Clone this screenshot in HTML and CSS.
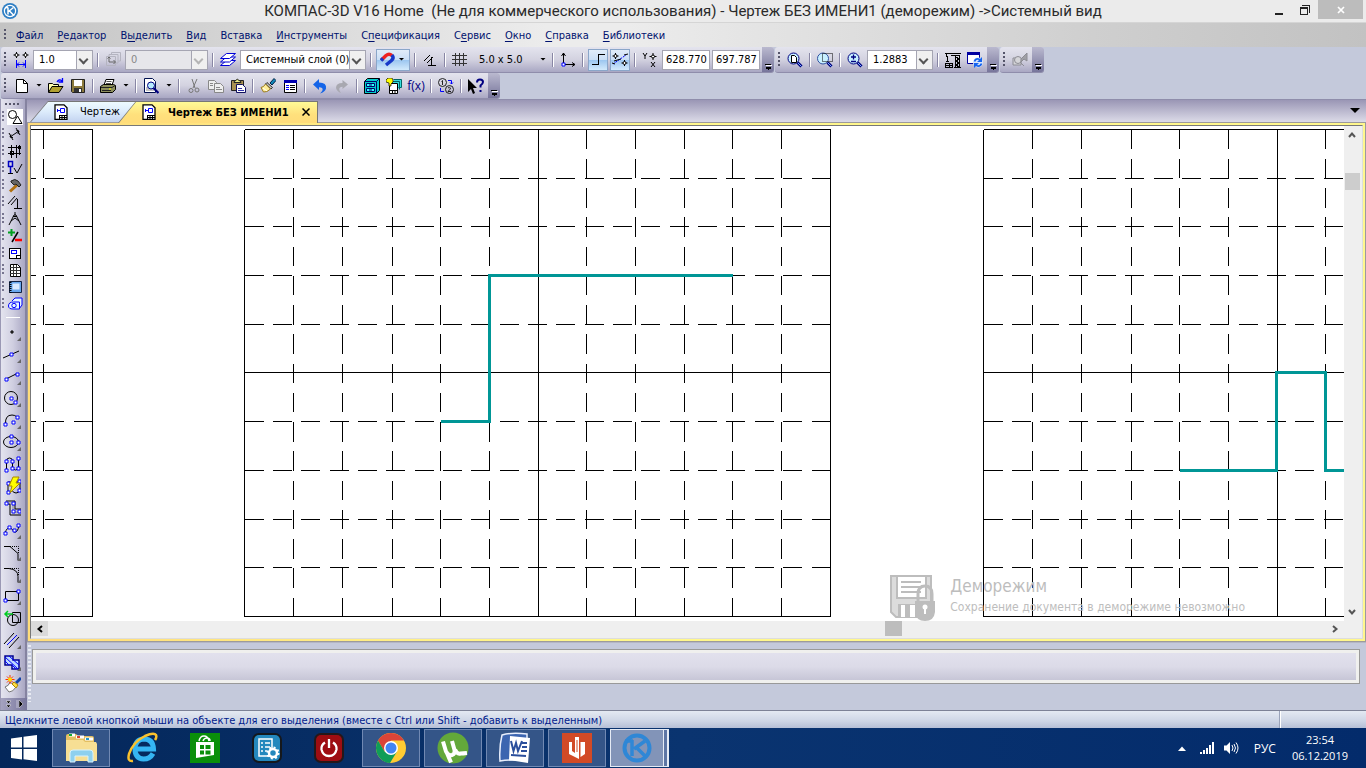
FILE: index.html
```html
<!DOCTYPE html>
<html lang="ru">
<head>
  <meta charset="UTF-8">
  <meta name="viewport" content="width=device-width, initial-scale=1.0">
  <title>КОМПАС-3D V16 Home</title>
  <link rel="stylesheet" href="styles.css">
</head>
<body>
  <!-- Title bar -->
  <header class="titlebar">
    <svg class="app-logo" viewBox="0 0 16 16"><circle cx="8" cy="8" r="8" fill="#2f7fc4"/><circle cx="8" cy="8" r="5.6" fill="none" stroke="#fff" stroke-width="1.2"/><path d="M6 4.500v7M6.500 8.500l5-4M7.500 8l4.500 4.500M3 5l3-1" fill="none" stroke="#fff" stroke-width="1.500"/></svg>
    <h1>КОМПАС-3D V16 Home&nbsp; (Не для коммерческого использования) - Чертеж БЕЗ ИМЕНИ1 (деморежим) -&gt;Системный вид</h1>
    <div class="window-buttons">
      <button aria-label="Свернуть"><svg viewBox="0 0 12 12"><path d="M2 9h8v2H2z" fill="#222"/></svg></button>
      <button aria-label="Восстановить"><svg viewBox="0 0 12 12" class="crisp"><path d="M1.500 3.500h7v7h-7zM1 4.500h8M3 1.500h7.500V9" fill="none" stroke="#222"/></svg></button>
      <button class="close" aria-label="Закрыть"><svg viewBox="0 0 12 12"><path d="M3 3l6 6M9 3L3 9" stroke="#fff" stroke-width="1.700"/></svg></button>
    </div>
  </header>

  <!-- Menu -->
  <nav class="menu">
    <span class="grip"></span>
    <a href="#"><u>Ф</u>айл</a>
    <a href="#"><u>Р</u>едактор</a>
    <a href="#">В<u>ы</u>делить</a>
    <a href="#"><u>В</u>ид</a>
    <a href="#">Вст<u>а</u>вка</a>
    <a href="#"><u>И</u>нструменты</a>
    <a href="#">С<u>п</u>ецификация</a>
    <a href="#">С<u>е</u>рвис</a>
    <a href="#"><u>О</u>кно</a>
    <a href="#"><u>С</u>правка</a>
    <a href="#"><u>Б</u>иблиотеки</a>
  </nav>

  <!-- Current state toolbar -->
  <div class="toolbar-row">
    <div class="toolbar">
      <span class="grip"></span>
      <button class="tool" aria-label="Шаг курсора"><svg viewBox="0 0 16 16"><path d="M3.500 0v6M.5 3h6M12.500 0v6M9.500 3h6" stroke="#000"/><circle cx="3.500" cy="3" r="1.500" fill="#fff" stroke="#000"/><circle cx="12.500" cy="3" r="1.500" fill="#fff" stroke="#000"/><path d="M3.500 8v8M12.500 8v8M4 12.500h8M6 10.500l-2 2 2 2M10 10.500l2 2-2 2" fill="none" stroke="#00f"/></svg></button>
      <span class="combo w-60"><select aria-label="Шаг"><option>1.0</option></select></span>
      <span class="sep"></span>
      <button class="tool" aria-label="Состояния видов"><svg viewBox="0 0 16 16" fill="none" stroke="#b4b4c0"><path d="M6.500 3V.5h9V9h-2M4 5V2.500h9V11h-2M1.500 4.500h9v9h-9z"/><path d="M4 5v5h6M2.500 6.500L4 5l1.500 1.500M8.500 8l2 2-2 2" stroke="#666"/></svg></button>
      <span class="combo w-83 off"><select aria-label="Вид" disabled><option>0</option></select></span>
      <span class="sep"></span>
      <button class="tool" aria-label="Слои"><svg viewBox="0 0 16 16" fill="#fff" stroke="#0000d8"><path d="M.5 13.500h9l6-5h-9z"/><path d="M.5 10h9l6-5h-9z"/><path d="M.5 6.500h9l6-5h-9z"/></svg></button>
      <span class="combo w-126"><select aria-label="Слой"><option>Системный слой (0)</option></select></span>
      <span class="sep"></span>
      <button class="tool on wide" aria-label="Привязки"><svg viewBox="0 0 16 16" fill="none" stroke-width="3.500"><path d="M1.500 8L6 3.500Q9 1 12 3.500" stroke="#e22"/><path d="M12 3q2.500 3-.5 5.500L6 13" stroke="#1738c8"/><path d="M1 8.500l2-2" stroke="#1738c8"/></svg><i class="arrow"></i></button>
      <span class="sep"></span>
      <button class="tool" aria-label="Ограничения"><svg viewBox="0 0 16 16" fill="none" stroke="#000"><path d="M2 9l6-6M5 11l6-6M9.500 5v8M6 13.500h8"/></svg></button>
      <span class="sep"></span>
      <button class="tool" aria-label="Сетка"><svg viewBox="0 0 16 16" class="crisp" stroke="#333"><path d="M0 3.500h15M0 7.500h15M0 11.500h15M3.500 1v13M7.500 1v13M11.500 1v13"/></svg></button>
      <button class="grid-step">5.0 x 5.0<i class="arrow"></i></button>
      <span class="sep"></span>
      <button class="tool" aria-label="Локальная СК"><svg viewBox="0 0 16 16" fill="none" stroke="#000"><path d="M3.500 12V1M1.500 4l2-3 2 3M5 12.500h10M12 10.500l3 2-3 2"/><path d="M2 11h3v3H2z" fill="#fff" stroke="#00f"/></svg></button>
      <span class="sep"></span>
      <button class="tool on" aria-label="Ортогональное черчение"><svg viewBox="0 0 16 16" class="crisp"><path d="M2 12.500h6.500v-10H15" fill="none" stroke="#000"/></svg></button>
      <button class="tool on" aria-label="Округление"><svg viewBox="0 0 16 16" fill="none" stroke="#000"><path d="M3.500 1v6M.5 4h6M12.500 8v6M9.500 11h6"/><path d="M1 12L14 3" stroke="#00f" stroke-dasharray="2 1"/><path d="M0 11l3 1M12 3l4-1M2 9l7-2"/><circle cx="3.500" cy="4" r="1.500" fill="#fff"/><circle cx="12.500" cy="11" r="1.500" fill="#fff"/></svg></button>
      <span class="sep"></span>
      <button class="tool" aria-label="Координаты"><svg viewBox="0 0 16 16" fill="none" stroke="#000"><path d="M1 1l2 3 2-3M3 4v3M9 10l4 5M13 10l-4 5M11 1v7M7.500 4.500h7"/><circle cx="11" cy="4.500" r="1.500" fill="#fff"/></svg></button>
      <input class="coord" type="text" value="628.770" aria-label="X">
      <input class="coord" type="text" value="697.787" aria-label="Y">
      <span class="cap"></span>
    </div>
    <div class="toolbar">
      <span class="grip"></span>
      <button class="tool" aria-label="Показать все"><svg viewBox="0 0 16 16"><circle cx="6.500" cy="6.500" r="5.500" fill="#c8f0ff" stroke="#000080"/><path d="M4.500 3.500h3l2 2v5h-5z" fill="#fff" stroke="#000"/><path d="M10.500 10.500l4 4" stroke="#000080" stroke-width="3"/><path d="M11 11l3.500 3.500" stroke="#7ab0ff"/></svg></button>
      <span class="sep"></span>
      <button class="tool" aria-label="Увеличить рамкой"><svg viewBox="0 0 16 16"><circle cx="6" cy="6.500" r="5.500" fill="#c8f0ff" stroke="#3050a0"/><path d="M5.500 1.500h10v8h-10z" fill="none" stroke="#000" stroke-dasharray="1 1"/><path d="M10.500 10.500l4 4" stroke="#000080" stroke-width="3"/><path d="M11 11l3.500 3.500" stroke="#7ab0ff"/></svg></button>
      <span class="sep"></span>
      <button class="tool" aria-label="Масштаб"><svg viewBox="0 0 16 16"><circle cx="6.500" cy="6.500" r="5.500" fill="#c8f0ff" stroke="#000080"/><path d="M6.500 2.500v5M4 5h5M4 9.500h5" stroke="#000080" stroke-width="1.300"/><path d="M10.500 10.500l4 4" stroke="#000080" stroke-width="3"/><path d="M11 11l3.500 3.500" stroke="#7ab0ff"/></svg></button>
      <span class="combo w-66"><select aria-label="Текущий масштаб"><option>1.2883</option></select></span>
      <span class="sep"></span>
      <button class="tool" aria-label="Перестроить"><svg viewBox="0 0 16 16" class="crisp" fill="none" stroke="#000"><path d="M0 1.500h16M1.500 2v3M2.500 4v5M1 9.500h3M.5 11.500h7v4h-7zM4 11v5M0 13.500h8M6 3.500h9"/><path d="M10.500 4v11M14.500 4v11M9 15.500h7"/><path d="M11 5l3 2-3 2 3 2-3 2 3 2"/></svg></button>
      <button class="tool" aria-label="Обновить"><svg viewBox="0 0 16 16"><path d="M.5.500h12v11H.5z" fill="#fff" stroke="#0000a0"/><path d="M0 0h13v3H0z" fill="#0000a0"/><circle cx="11" cy="10.500" r="5" fill="#d9e6fb"/><path d="M7.500 9.500q1-3 4-2.500l2 1M14.500 11.500q-1 3-4 2.500l-2-1" fill="none" stroke="#1464f0" stroke-width="1.700"/><path d="M15 5v5h-5zM7 16v-5h5z" fill="#1464f0"/></svg></button>
      <span class="cap"></span>
    </div>
    <div class="toolbar">
      <span class="grip"></span>
      <button class="tool" aria-label="Вид" disabled><svg viewBox="0 0 16 16" fill="#d5d5d9" stroke="#8c8c94"><path d="M1 6h8v7H1z"/><circle cx="6" cy="8" r="3.500"/><path d="M9 7l6-6v8l-3-2-3 3z" fill="#a0a0a6"/><path d="M8 10l4 4"/></svg></button>
      <span class="cap"></span>
    </div>
  </div>

  <!-- Standard toolbar -->
  <div class="toolbar-row">
    <div class="toolbar">
      <span class="grip"></span>
      <button class="tool" aria-label="Создать"><svg viewBox="0 0 16 16"><path d="M3.500 1.500h7l4 4v9h-11z" fill="#fff" stroke="#000"/><path d="M10.500 1.500v4h4" fill="none" stroke="#000"/></svg></button>
      <i class="arrow"></i>
      <button class="tool" aria-label="Открыть"><svg viewBox="0 0 16 16"><path d="M.5 14V5.500h4l1 1h5V9" fill="#ffffb0" stroke="#000"/><path d="M.5 14.500l3.500-6h11l-4 6z" fill="#b0a030" stroke="#000"/><path d="M9 4q2-3.500 5-1M14.500 0v4h-4" fill="none" stroke="#00f" stroke-width="1.300"/></svg></button>
      <button class="tool" aria-label="Сохранить"><svg viewBox="0 0 16 16"><path d="M1.500 1.500h13v13h-12l-1-1z" fill="#8c7a3c" stroke="#222"/><path d="M4 2h8v6H4z" fill="#fff"/><path d="M4 10h8v4H4z" fill="#333"/><path d="M9 11h2v3H9z" fill="#fff"/></svg></button>
      <span class="sep"></span>
      <button class="tool" aria-label="Печать"><svg viewBox="0 0 16 16"><path d="M4 7l2-5.500h8L12 7z" fill="#fff" stroke="#000"/><path d="M6.500 3.500h5M6 5.500h5" stroke="#555"/><path d="M.5 8.500l3-2h10l2 1v4l-3 3H.5z" fill="#8d8f5d" stroke="#000"/><path d="M1 9.500h11l3-2M2 12.500h9" fill="none" stroke="#222"/><path d="M9 11h2" stroke="#ff0"/></svg></button>
      <i class="arrow"></i>
      <span class="sep"></span>
      <button class="tool" aria-label="Просмотр"><svg viewBox="0 0 16 16"><path d="M1.500.5h8l3 3v11h-11z" fill="#fff" stroke="#001050"/><path d="M3 12h8M3 10h2" stroke="#888"/><circle cx="8" cy="7.500" r="3.500" fill="#b8ecff" stroke="#000080"/><path d="M10.500 10l5 5" stroke="#000080" stroke-width="2.200"/></svg></button>
      <i class="arrow"></i>
      <span class="sep"></span>
      <button class="tool" aria-label="Вырезать"><svg viewBox="0 0 16 16" fill="none" stroke="#777"><path d="M6 1l3 9M11 1L7 10"/><circle cx="5" cy="12.500" r="2"/><circle cx="11" cy="12" r="2"/></svg></button>
      <button class="tool" aria-label="Копировать"><svg viewBox="0 0 16 16" fill="#eee" stroke="#888"><path d="M.5 2.500h6l2 2v7h-8z"/><path d="M6.500 5.500h6l3 3v6h-9z"/><path d="M2 5.500h3M2 7.500h3M8 9.500h4M8 11.500h6"/></svg></button>
      <button class="tool" aria-label="Вставить"><svg viewBox="0 0 16 16"><path d="M1.500 2.500h12v10h-12z" fill="#a89050" stroke="#222"/><path d="M4 4.500q0-2 2-2 1-3 3 0 2 0 2 2z" fill="#ee8" stroke="#222"/><path d="M6.500 6.500h6l3 3v5h-9z" fill="#fff" stroke="#101060"/><path d="M8 10.500h4M8 12.500h6" stroke="#33a"/></svg></button>
      <span class="sep"></span>
      <button class="tool" aria-label="Копировать свойства"><svg viewBox="0 0 16 16"><path d="M10 5l4-4.500 2 2L12 7z" fill="#18b" stroke="#024"/><path d="M7 4.500l5.500 5L11 11 5.500 6z" fill="#bbb" stroke="#333"/><path d="M5.500 6l5 5Q7 14.500 3.500 14L1 9.500Q4 9 5.500 6z" fill="#fe9" stroke="#997a20"/><path d="M3 10l4 3" stroke="#fff"/></svg></button>
      <button class="tool" aria-label="Свойства"><svg viewBox="0 0 16 16"><path d="M2.500 2.500h12v12h-12z" fill="#fff" stroke="#000"/><path d="M2 2h13v3H2z" fill="#0000b0"/><path d="M4 7.500h3M4 9.500h3M4 11.500h3" stroke="#00f"/><path d="M8 7.500h5M8 9.500h5M8 11.500h5" stroke="#000"/></svg></button>
      <span class="sep"></span>
      <button class="tool" aria-label="Отменить"><svg viewBox="0 0 16 16"><path d="M1 6.500L7 1v3.500q8 0 7 6Q13 14 8 15.500q4-4 2-5.500-1-.8-3-.8V12z" fill="#1565e8"/></svg></button>
      <button class="tool" aria-label="Повторить"><svg viewBox="0 0 16 16"><path d="M14 6.500L8.500 2v3Q2 5 2 10q1 3.500 5 5-3-4-1-5.500 1-.7 2.500-.7V11z" fill="#a8a8b0"/></svg></button>
      <span class="sep"></span>
      <button class="tool" aria-label="Менеджер библиотек"><svg viewBox="0 0 16 16"><path d="M.5 3.500l3-3h12v12l-3 3H.5z" fill="#0cc" stroke="#000"/><path d="M.5 3.500h12v12M12.500 3.500l3-3" fill="none" stroke="#006"/><path d="M2.500 5.500h8v3h-8zM2.500 10.500h8v3h-8z" fill="#3ff" stroke="#006"/><path d="M5 7h3M5 12h3" stroke="#006"/></svg></button>
      <button class="tool" aria-label="Дерево"><svg viewBox="0 0 16 16"><path d="M7.500 1.500h8v8h-3M5.500 3.500h8v8" fill="#3dd" stroke="#066"/><path d="M3.500 5.500h8v10h-8z" fill="#fff" stroke="#000"/><path d="M3 12.500h9M6.500 12v4M9 12v4" stroke="#000"/><path d="M0 2l2-2h4l1 2v2L5 6v2H3V5L0 4z" fill="#ff0" stroke="#000" stroke-width=".7"/></svg></button>
      <button class="tool fx">f(x)</button>
      <span class="sep"></span>
      <button class="tool" aria-label="Перенумеровать"><svg viewBox="0 0 16 16" fill="none" stroke="#222"><circle cx="4.500" cy="4.500" r="4"/><circle cx="11.500" cy="11.500" r="4"/><path d="M3.500 3.500l1-1V7M10 10q1.500-1.500 2.500 0 0 1-2.500 3.500h3"/><path d="M10 2.500h3.500V6M12 4.500l1.500 1.500L15 4.500M6 13.500H2.500V10" stroke="#00f"/></svg></button>
      <span class="sep"></span>
      <button class="tool" aria-label="Справка"><svg viewBox="0 0 16 16"><path d="M0 1v13l3-3 2 5 2-1-2-5h4z" fill="#000"/><path d="M9 4.500Q9 1.500 12 1.500t3 2.500q0 1.500-2.500 3.500v2M12.500 12v2" fill="none" stroke="#000080" stroke-width="2"/></svg></button>
      <span class="cap"></span>
    </div>
  </div>

  <main class="work">
    <!-- Compact panel -->
    <aside class="side">
      <span class="side-handle"></span>
      <div class="groups">
        <button class="on" aria-label="Геометрия"><svg viewBox="0 0 16 16" fill="#fff" stroke="#000"><circle cx="5.500" cy="5.500" r="4"/><path d="M10.500 7l4.500 7.500H6z"/></svg></button>
        <button aria-label="Размеры"><svg viewBox="0 0 16 16" fill="none" stroke="#000"><path d="M3 11l9-6M2 7l4 7M9 2l4 7M4 8.500L3 11l3 .5M9.500 4.500L12 5l-1 3"/></svg></button>
        <button aria-label="Обозначения"><svg viewBox="0 0 16 16" class="crisp" fill="none" stroke="#000"><path d="M1 4.500h13M1 10.500h13M4.500 2v13M9.500 2v13M12.500 2v10"/><path d="M3.500 8.500h3v3h-3zM11.500 3.500h2v2h-2z"/></svg></button>
        <button aria-label="Построение"><svg viewBox="0 0 16 16" fill="none"><path d="M1.500 1.500h4v5h-4zM3.500 7v6" stroke="#0000c0" stroke-width="1.500"/><path d="M1 13.500h5M7 8l3 5 5-9" stroke="#000"/></svg></button>
        <button aria-label="Редактирование"><svg viewBox="0 0 16 16"><path d="M10 8L3 14.500" stroke="#b07010" stroke-width="3"/><path d="M4 4q4-3 7 0l3 4-2 2-3-3-2 1-3-3z" fill="#666" stroke="#222"/></svg></button>
        <button aria-label="Параметризация"><svg viewBox="0 0 16 16" fill="none" stroke="#000"><path d="M1 10l7-8M4 11l6-7M10.500 5v9M7 14.500h8"/></svg></button>
        <button aria-label="Измерения"><svg viewBox="0 0 16 16" fill="none" stroke="#000"><path d="M2 14L7 4h2l5 10M8 1v3M4 10l4-3 4 3M6 5.500h4"/></svg></button>
        <button aria-label="Выделение"><svg viewBox="0 0 16 16"><path d="M4.500 1v7M1 4.500h7" stroke="#00a020" stroke-width="2"/><path d="M5 14l6-10" stroke="#000" stroke-width="1.500"/><path d="M8 12h7" stroke="#f00" stroke-width="2.500"/></svg></button>
        <button aria-label="Ассоциативные виды"><svg viewBox="0 0 16 16" class="crisp"><path d="M2.500 3.500h11v10h-11z" fill="#fff" stroke="#000"/><path d="M4.500 5.500h5v3h-5z" fill="none" stroke="#00f"/><path d="M9.500 10.500h4v3h-4z" fill="none" stroke="#000"/></svg></button>
        <button aria-label="Спецификация"><svg viewBox="0 0 16 16"><path d="M3.500 2.500h7l3 3v9h-10z" fill="#fff" stroke="#000"/><path d="M3 5.500h10M3 8.500h10M3 11.500h10M6.500 3v11M9.500 3v11" stroke="#333"/></svg></button>
        <button aria-label="Отчеты"><svg viewBox="0 0 16 16"><path d="M2.500 2.500h12v11h-12z" fill="#69a8ef" stroke="#124"/><path d="M5.500 4.500h7v6h-7z" fill="#d9eaff"/><path d="M3.500 3v11" stroke="#000" stroke-width="2" stroke-dasharray="1 1"/></svg></button>
        <button aria-label="Вставки"><svg viewBox="0 0 16 16" fill="#e6f4ff" stroke="#00f"><path d="M5 5l3-3h7v7l-3 4"/><path d="M1.500 10q0-4 5-4h6v7H6q-4.500 0-4.500-3z"/><circle cx="7" cy="9.500" r="2.200"/></svg></button>
      </div>
      <div class="tools">
        <button class="more" aria-label="Точка"><svg viewBox="0 0 20 20"><circle cx="11" cy="10" r="1.200" fill="#555" stroke="#000"/></svg></button>
        <button class="more" aria-label="Вспомогательная прямая"><svg viewBox="0 0 20 20"><path d="M2 14L18 7" stroke="#000"/><path class="node" d="M9 9h3v3H9z"/></svg></button>
        <button class="more" aria-label="Отрезок"><svg viewBox="0 0 20 20"><path d="M5 13l10-5" stroke="#000"/><path class="node" d="M4 12h3v3H4zM15 7h3v3h-3z"/></svg></button>
        <button class="more" aria-label="Окружность"><svg viewBox="0 0 20 20"><circle cx="10" cy="10" r="6.500" fill="none" stroke="#000"/><path class="node" d="M9 9h3v3H9zM13 13h3v3h-3z"/></svg></button>
        <button class="more" aria-label="Дуга"><svg viewBox="0 0 20 20"><path d="M4.500 14Q4 5 11 5q3 0 5 2" fill="none" stroke="#000"/><path class="node" d="M3 13h3v3H3zM15 6h3v3h-3zM11 11h3v3h-3z"/></svg></button>
        <button class="more" aria-label="Эллипс"><svg viewBox="0 0 20 20"><ellipse cx="10" cy="10" rx="7.500" ry="5.500" fill="none" stroke="#000"/><path class="node" d="M9 9h3v3H9zM9 3h3v3H9zM16 9h3v3h-3z"/></svg></button>
        <button aria-label="Непрерывный ввод"><svg viewBox="0 0 20 20"><path d="M5.500 15V7q0-3 3-3t3 3v6q0 3 3 3t3-3V4" fill="none" stroke="#000"/><path class="node" d="M4 15h3v3H4zM4 6h3v3H4zM10 6h3v3h-3zM10 13h3v3h-3zM16 3h3v3h-3zM16 13h3v3h-3z"/></svg></button>
        <button aria-label="Автолиния"><svg viewBox="0 0 20 20"><path d="M7 16V6h12v8q-1 3-4 3t-4-3" fill="none" stroke="#000"/><path class="node" d="M6 6h3v3H6zM6 15h3v3H6zM17 4h3v3h-3zM17 13h3v3h-3z"/><path d="M12 1h6l-3 6h4L9 17l2-7H8z" fill="#ff0" stroke="#a80"/></svg></button>
        <button aria-label="Линия"><svg viewBox="0 0 20 20"><path d="M5 3h9v8h6M5 6h4v11h11" fill="none" stroke="#000"/><path d="M6 5h6v9h7" fill="none" stroke="#888"/><path class="node" d="M4 4h3v3H4zM11 4h3v3h-3zM11 12h3v3h-3zM17 12h3v3h-3z"/></svg></button>
        <button class="more" aria-label="Кривая Безье"><svg viewBox="0 0 20 20"><path d="M4 13q2-6 5-5t4 4q4 1 5-7" fill="none" stroke="#000"/><path class="node" d="M3 12h3v3H3zM7 6h3v3H7zM12 9h3v3h-3zM16 4h3v3h-3z"/></svg></button>
        <button class="more" aria-label="Фаска"><svg viewBox="0 0 20 20" fill="none" stroke="#000"><path d="M3 4.500h6l8 7V18"/><path d="M9 4.500h8.500V12" stroke-dasharray="1 1"/></svg></button>
        <button class="more" aria-label="Скругление"><svg viewBox="0 0 20 20" fill="none" stroke="#000"><path d="M3 4.500h5q9 1 9 8V18"/><path d="M9 4.500h8.500V12" stroke-dasharray="1 1"/></svg></button>
        <button class="more" aria-label="Прямоугольник"><svg viewBox="0 0 20 20"><path d="M4.500 5.500h13v9h-13z" fill="none" stroke="#000"/><path class="node" d="M3 13h3v3H3zM16 4h3v3h-3z"/></svg></button>
        <button aria-label="Контур"><svg viewBox="0 0 20 20" fill="none"><path d="M11.500 4.500h8v10h-8z" stroke="#000"/><circle cx="12" cy="12" r="5.500" stroke="#000"/><path d="M5 6h7M7 3L4 6l3 3" stroke="#0c2" stroke-width="1.500"/></svg></button>
        <button class="more" aria-label="Эквидистанта"><svg viewBox="0 0 20 20" stroke="#000"><path d="M3 14L13 3M8 18L18 7"/><path d="M6 15L16 5" stroke="#00f"/></svg></button>
        <button class="more" aria-label="Штриховка"><svg viewBox="0 0 20 20"><path d="M4 4h8v4h6v9h-7v-4H4z" fill="#bcd8ff" stroke="#000090" stroke-width="1.500"/><path d="M4 5l13 12M4 9l4 4M8 4l10 9M11 13l4 4" stroke="#00f"/></svg></button>
        <button aria-label="Очистить"><svg viewBox="0 0 20 20"><path d="M14 8l5-5 2 2-5 5z" fill="#14a"/><path d="M9 8l6 5q-3 5-7 5l-4-5q4-1 5-5z" fill="#fff" stroke="#777"/><path d="M11 10l4 4 2-3-4-3z" fill="#fd4" stroke="#a80"/><path d="M9 1v9M4.500 5.500h9M6 2.500l6 6M12 2.500l-6 6" stroke="#f30"/><circle cx="9" cy="5.500" r="2" fill="#fd0"/></svg></button>
      </div>
      <div class="side-end"><svg viewBox="0 0 26 12"><path d="M5 3h5L7.500 5.500zM5 7h5L7.500 9.500zM16 2v8M18 2v8l4-4z" stroke="#fff" stroke-width=".5"/></svg></div>
    </aside>

    <section class="document">
      <!-- Document tabs -->
      <div class="tabs">
        <a class="tab" href="#"><svg class="sheet" viewBox="0 0 14 16"><path d="M1 .8h9l3 3v11.500H1z" fill="#fff" stroke="#000" stroke-width="1.300"/><path d="M6.500 4.500h4v4h-4zM3 6.500h3M3.500 5v3" fill="none" stroke="#00f"/><path d="M5 11.500h8M5 13.500h8M5.500 11v4M8 11v4M10.500 11v4" stroke="#000"/></svg>Чертеж</a>
        <a class="tab active" href="#"><svg class="sheet" viewBox="0 0 14 16"><path d="M1 .8h9l3 3v11.500H1z" fill="#fff" stroke="#000" stroke-width="1.300"/><path d="M6.500 4.500h4v4h-4zM3 6.500h3M3.500 5v3" fill="none" stroke="#00f"/><path d="M5 11.500h8M5 13.500h8M5.500 11v4M8 11v4M10.500 11v4" stroke="#000"/></svg>Чертеж БЕЗ ИМЕНИ1<svg class="x" viewBox="0 0 8 8"><path d="M.5.500l7 7M7.500.500l-7 7" stroke="#000" stroke-width="1.500"/></svg></a>
        <i class="arrow tabs-list"></i>
      </div>

      <div class="frame">
        <div class="view">
          <div class="canvas">
            <svg class="drawing">
              <!-- one square sheet with its dashed grid, 586 x 487 -->
              <defs>
                <g id="sheet-grid">
                  <path class="solid" d="M0 0h586M0 243h586M0 487h586M0 0v487M294 0v487M586 0v487"/>
                  <path class="dash-h" d="M0 49h586M0 97h586M0 146h586M0 195h586M0 292h586M0 341h586M0 390h586M0 438h586"/>
                  <path class="dash-v" d="M49 0v487M98 0v487M148 0v487M196 0v487M245 0v487M342 0v487M391 0v487M440 0v487M488 0v487M537 0v487"/>
                </g>
              </defs>
              <use href="#sheet-grid" x="-524.5" y="3.5"/>
              <use href="#sheet-grid" x="213.5" y="3.5"/>
              <use href="#sheet-grid" x="952.5" y="3.5"/>
              <path class="graph" d="M410 295.500h48.500v-146H702"/>
              <path class="graph" d="M1149 344.500h96.500v-98h49v98h400"/>
            </svg>
            <div class="demo">
              <svg viewBox="0 0 46 46"><path d="M1 1h40v41H6l-5-5z" fill="#dcdcdc" stroke="#bdbdbd" stroke-width="2"/><path d="M7 1h29v22H7z" fill="#fff" stroke="#bdbdbd" stroke-width="2"/><path d="M11 7h20M11 12h20M11 17h20" stroke="#bdbdbd" stroke-width="2"/><path d="M8 29h22v14H8z" fill="#bdbdbd"/><path d="M11 30h4v12h-4zM20 30h5v12h-5z" fill="#fff"/><path d="M28 27v-8q0-8 7-8t7 8v8" fill="none" stroke="#bdbdbd" stroke-width="3"/><path d="M25 26h20v11q-1 9-10 9t-10-9z" fill="#bdbdbd"/><circle cx="35" cy="32" r="2.500" fill="#fff"/><path d="M34 32h2v7h-2z" fill="#fff"/></svg>
              <div>
                <p class="demo-title">Деморежим</p>
                <p class="demo-note">Сохранение документа в деморежиме невозможно</p>
              </div>
            </div>
          </div>
          <div class="scroll-v">
            <svg viewBox="0 0 8 8"><path d="M1 6l3-3.500L7 6" /></svg>
            <span class="thumb"></span>
            <svg viewBox="0 0 8 8"><path d="M1 2l3 3.500L7 2"/></svg>
          </div>
          <div class="scroll-h">
            <span class="back"><svg viewBox="0 0 8 8"><path d="M6 1L2.500 4 6 7"/></svg></span>
            <span class="thumb"></span>
            <svg viewBox="0 0 8 8"><path d="M2 1l3.500 3L2 7"/></svg>
          </div>
        </div>
      </div>

      <!-- Property panel -->
      <div class="props">
        <span class="props-grip"></span>
        <div class="props-panel"></div>
      </div>
    </section>
  </main>

  <footer class="status">
    <p>Щелкните левой кнопкой мыши на объекте для его выделения (вместе с Ctrl или Shift - добавить к выделенным)</p>
    <span class="status-cell"></span>
  </footer>

  <!-- Windows taskbar -->
  <div class="taskbar">
    <button class="start" aria-label="Пуск"><svg viewBox="0 0 26 26" fill="#fff"><path d="M0 3.500l11-1.500v10.500H0zM12.500 1.800L26 0v12.500H12.500zM0 14h11v10.500L0 23zM12.500 14H26v12l-13.500-1.800z"/></svg></button>
    <button class="task open" aria-label="Проводник"><svg viewBox="0 0 32 32"><path d="M1 4q0-2 2-2h8l2 2h14q2 0 2 2v20H1z" fill="#e3bf62"/><path d="M4 3h6M11 5h8M20 7h8" stroke="#fff" stroke-width="3"/><path d="M4 3h3" stroke="#1a3" stroke-width="2"/><path d="M12 5h3" stroke="#d43" stroke-width="2"/><path d="M21 7h3" stroke="#29c" stroke-width="2"/><path d="M1 8h17l2 2h11l1 2v17H1z" fill="#f7df94"/><path d="M5 30v-9q0-3 3-3h17q3 0 3 3v9h-5v-6H10v6z" fill="#8ed0ee" stroke="#d8f2fc"/></svg></button>
    <button class="task" aria-label="Internet Explorer"><svg viewBox="0 0 32 32" fill="none"><path d="M26 21.500Q23 27 16.500 27 8 26.500 8 17T17 7q9 0 9.500 10H9" stroke="#35b5f3" stroke-width="5"/><path d="M6 29q-6 1-4-7Q6 10 18 4q9-4 11-1 1 2-1 5" stroke="#fac12d" stroke-width="2.500"/></svg></button>
    <button class="task" aria-label="Магазин"><svg viewBox="0 0 32 32"><path d="M1 1h30v30H1z" fill="#0a8f0a"/><path d="M7 10h18v13L7 26z" fill="#fff"/><path d="M10 9q1-5 5-5t5 5M14 9q1-3 4-3t3 3" fill="none" stroke="#fff" stroke-width="1.500"/><path d="M11 13h4v4h-4zM16.500 13h5v4h-5zM11 18.500h4v4h-4zM16.500 18.500h5v4h-5z" fill="#0a8f0a"/></svg></button>
    <button class="task" aria-label="Настройки"><svg viewBox="0 0 32 32"><rect x="1" y="1" width="30" height="30" rx="7" fill="#15181c"/><rect x="3" y="3" width="26" height="26" rx="5" fill="#2488bd"/><path d="M8 7h13v17H8z" fill="none" stroke="#fff" stroke-width="1.500"/><path d="M10 11h2M14 11h5M10 15h2M14 15h5M10 19h2M14 19h2" stroke="#fff" stroke-width="1.500"/><circle cx="22" cy="21" r="4" fill="#2488bd" stroke="#fff" stroke-width="2.500"/><circle cx="22" cy="21" r="5.500" fill="none" stroke="#fff" stroke-width="2" stroke-dasharray="2 2.300"/></svg></button>
    <button class="task" aria-label="Выключение"><svg viewBox="0 0 32 32"><rect x="1" y="1" width="30" height="30" rx="7" fill="#25181a"/><rect x="3" y="3" width="26" height="26" rx="5" fill="#9e0d12"/><path d="M12 10.500q-4 2.500-3.500 7Q10 24 16 24t7.500-6.500q.5-4.500-3.500-7M16 7v9" fill="none" stroke="#fff" stroke-width="2.300"/></svg></button>
    <button class="task open" aria-label="Chrome"><svg viewBox="0 0 32 32"><circle cx="16" cy="16" r="15" fill="#fc3"/><path d="M3 8.500A15 15 0 0 1 29 8.500H16l-6.500 11z" fill="#db4437"/><path d="M3 8.500A15 15 0 0 0 15 31l7-11.500H9.500z" fill="#0f9d58"/><circle cx="16" cy="16" r="7" fill="#fff"/><circle cx="16" cy="16" r="5.500" fill="#4285f4"/></svg></button>
    <button class="task open" aria-label="uTorrent"><svg viewBox="0 0 32 32"><circle cx="16" cy="16" r="15.500" fill="#63a83a"/><path d="M6 9.500l3 10q2 4.500 6 3.500 3.500-1 2.500-5L15 9M18 17.500q2 5 5.500 4 2.500 0 6.500-.5M9.500 20l4.500 10.500" fill="none" stroke="#fff" stroke-width="4"/></svg></button>
    <button class="task open" aria-label="Word"><svg viewBox="0 0 32 32"><path d="M3 3q10-3 25-1v27q-15-2-27 0Q0 15 3 3z" fill="#3c65b0" stroke="#e8eefc" stroke-width="1.500"/><path d="M11 4l20 2-2 25-19-3z" fill="#fff"/><path d="M12 9l2.500 10L17 11l2 8 4-10" fill="none" stroke="#2b4f9c" stroke-width="2"/><path d="M23 11h5M23 15h5M22 19h6M12 23l15 1" stroke="#2b4f9c" stroke-width="2"/></svg></button>
    <button class="task open" aria-label="Чтение"><svg viewBox="0 0 32 32"><path d="M1 1h30v30H1z" fill="#d24a26"/><path d="M8 10h3v9l3 2V5h4v22L8 22zM19.500 10H24v12l-4.500 3z" fill="#fff"/><path d="M16 8v12" stroke="#d24a26"/></svg></button>
    <button class="task open current" aria-label="КОМПАС-3D"><svg viewBox="0 0 32 32" fill="none" stroke="#2f87d6"><circle cx="16" cy="16" r="12.500" stroke-width="4"/><path d="M11 8v16M13 17L24 9M15 15l9 9M4 9h8" stroke-width="3.500"/></svg></button>
    <div class="tray">
      <svg class="up" viewBox="0 0 8 5"><path d="M0 5l4-4.500L8 5z" fill="#fff"/></svg>
      <svg class="net" viewBox="0 0 16 12" fill="#fff"><path d="M1 10h2v2H1zM4 8h2v4H4zM7 6h2v6H7zM10 3h2v9h-2zM13 0h2v12h-2z"/></svg>
      <svg class="net" viewBox="0 0 16 14"><path d="M1 4.500h2.500L7 1v12L3.500 9.500H1z" fill="#fff"/><path d="M9 4q2 3 0 6M11 3q3 4 0 8M13 1.500q4 5.500 0 11" fill="none" stroke="#fff"/></svg>
      <span class="lang">РУС</span>
      <time class="clock">23:54<br>06.12.2019</time>
    </div>
  </div>
</body>
</html>
```
FILE: styles.css
```css
* {
  box-sizing: border-box;
}

body {
  margin: 0;
  height: 100vh;
  display: flex;
  flex-direction: column;
  overflow: hidden;
  background-color: #c4c9db;
  font-family: "DejaVu Sans Condensed", "DejaVu Sans", sans-serif;
  font-size: 11px;
  color: #000;
}

button,
select,
input {
  font: inherit;
  color: inherit;
  margin: 0;
  padding: 0;
}

button {
  border: 0;
  background: none;
  display: flex;
  align-items: center;
  justify-content: center;
}

a {
  color: inherit;
  text-decoration: none;
}

p, h1 {
  margin: 0;
}

svg {
  display: block;
  flex: none;
}

.crisp {
  shape-rendering: crispEdges;
}

/* title bar */
.titlebar {
  height: 22px;
  flex: none;
  display: flex;
  align-items: center;
  background-color: #ebebeb;
}

.app-logo {
  width: 16px;
  height: 16px;
  margin-left: 2px;
}

.titlebar h1 {
  flex: 1;
  padding-left: 82px;
  text-align: center;
  font-family: Roboto, "Open Sans", sans-serif;
  font-size: 15px;
  font-weight: normal;
  line-height: 24px;
  white-space: nowrap;
  color: #2a2a2a;
}

.window-buttons {
  display: flex;
  align-self: flex-start;
  padding-right: 3px;
}

.window-buttons button {
  width: 26px;
  height: 19px;
}

.window-buttons .close {
  width: 45px;
  background-color: #bcbcbc;
}

.window-buttons svg {
  width: 12px;
  height: 12px;
}

/* menu */
.menu {
  height: 25px;
  flex: none;
  display: flex;
  align-items: center;
  padding-left: 1px;
  border-top: 1px solid #d5d5d5;
  background: linear-gradient(to right, #c3c3c3, #ececec 40%, #ececec 46%, #cfcfcf 80%, #c2c2c2);
  color: #00126e;
}

.menu a {
  margin-left: 7px;
  margin-right: 7px;
}

.menu u {
  text-underline-offset: 2px;
}

.grip {
  width: 8px;
  height: 16px;
  flex: none;
  background: repeating-linear-gradient(#55556a 0 2px, transparent 2px 4px) 3px 0 / 2px 100% no-repeat;
}

.menu .grip {
  height: 12px;
}

/* toolbars */
.toolbar-row {
  height: 26px;
  flex: none;
  display: flex;
  padding-left: 1px;
  gap: 1px;
}

.toolbar {
  display: flex;
  align-items: center;
  gap: 2px;
  height: 26px;
  border-radius: 3px;
  border-bottom: 1px solid #8f8dab;
  background: linear-gradient(#e4e4ee, #d3d2e0 50%, #a9a7c3);
}

.tool {
  width: 20px;
  height: 22px;
}

.tool svg {
  width: 16px;
  height: 16px;
}

.tool.on {
  border: 1px solid #8ba6c9;
  background: linear-gradient(#e1ecf9, #c9def6 50%, #9cc6f0 51%, #d3eafc);
}

.tool.wide {
  width: 34px;
}

.fx {
  font-family: "Open Sans", sans-serif;
  font-size: 12px;
  color: #000080;
}

.arrow {
  width: 11px;
  height: 4px;
  flex: none;
  background-color: #000;
  clip-path: polygon(3px 0, 9px 0, 6px 3px);
}

.sep {
  width: 6px;
  height: 14px;
  flex: none;
  background: linear-gradient(to right, #8886a4 50%, #fff 50%) 2px 0 / 2px 100% no-repeat;
}

.combo {
  position: relative;
  height: 20px;
  flex: none;
}

.combo select {
  width: 100%;
  height: 20px;
  padding-left: 5px;
  border: 1px solid #a5a5b2;
  border-radius: 0;
  background-color: #fff;
  appearance: none;
  opacity: 1;
}

/* drop-down button with its chevron */
.combo::before {
  content: "";
  position: absolute;
  top: 1px;
  right: 1px;
  width: 15px;
  height: 18px;
  border-left: 1px solid #a5a5b2;
  background-color: #f0f0f0;
  pointer-events: none;
}

.combo::after {
  content: "";
  position: absolute;
  top: 6px;
  right: 6px;
  width: 5px;
  height: 5px;
  border: solid #555;
  border-width: 0 2px 2px 0;
  transform: rotate(45deg);
  pointer-events: none;
}

.combo.off select {
  background-color: #e6e6ea;
  color: #888;
}

.combo.off::after {
  border-color: #b5b5b5;
}

.w-60 { width: 60px; }
.w-66 { width: 66px; }
.w-83 { width: 83px; }
.w-126 { width: 126px; }

.grid-step {
  width: 76px;
  height: 20px;
  padding-left: 7px;
  justify-content: space-between;
}

.coord {
  width: 48px;
  height: 20px;
  padding-left: 3px;
  border: 1px solid #a5a5b2;
  background-color: #fff;
}

.cap {
  width: 12px;
  align-self: stretch;
  flex: none;
  border-radius: 0 3px 3px 0;
  background:
    linear-gradient(#000, #000) 3px 17px / 6px 1px no-repeat,
    linear-gradient(#fff, #fff) 4px 18px / 6px 1px no-repeat,
    linear-gradient(#000, #000) 4px 20px / 5px 2px no-repeat,
    linear-gradient(#000, #000) 6px 22px / 1px 1px no-repeat,
    linear-gradient(#bab9cf, #77759b);
}

/* work area */
.work {
  flex: 1;
  min-height: 0;
  display: flex;
}

.side {
  width: 27px;
  flex: none;
  display: flex;
  flex-direction: column;
  border-right: 2px solid #8583a0;
  border-left: 1px solid #9a98b4;
  background: linear-gradient(to right, #e4e4ef, #cfcee0 50%, #a9a7c3);
}

.side-handle {
  height: 9px;
  flex: none;
  background: repeating-linear-gradient(to right, #55556a 0 2px, transparent 2px 4px) 4px 4px / 14px 2px no-repeat;
}

.groups {
  padding-bottom: 9px;
  background: linear-gradient(#fff, #fff) 5px 209px / 14px 1px no-repeat;
}

.groups button {
  width: 24px;
  height: 17px;
  padding-left: 4px;
  background: repeating-linear-gradient(#77758f 0 2px, transparent 2px 4px) 1px 3px / 2px 11px no-repeat;
}

.groups button svg {
  width: 16px;
  height: 16px;
}

.groups .on svg {
  background-color: #fff;
}

.tools {
  flex: 1;
}

.tools button {
  position: relative;
  width: 20px;
  height: 22px;
}

.tools button svg {
  width: 20px;
  height: 20px;
}

.more::after {
  content: "";
  position: absolute;
  right: 0;
  bottom: 2px;
  width: 4px;
  height: 4px;
  background-color: #666;
  clip-path: polygon(100% 0, 100% 100%, 0 100%);
}

.node {
  fill: #fff;
  stroke: #00f;
}

.side-end {
  height: 12px;
  margin-right: -2px;
  background: linear-gradient(to right, #a5a3c0, #77759b);
}

.document {
  flex: 1;
  min-width: 0;
  display: flex;
  flex-direction: column;
}

.tabs {
  height: 23px;
  flex: none;
  display: flex;
  align-items: flex-end;
  padding-left: 3px;
  border-top: 1px solid #8f8dab;
  background: linear-gradient(#9a96b5, #dcdbe8);
}

.tab {
  position: relative;
  isolation: isolate;
  height: 21px;
  width: 106px;
  display: flex;
  align-items: center;
  padding-left: 24px;
  background-color: #777;
  clip-path: polygon(18px 0, 100% 0, 100% 100%, 0 100%);
}

.tab::before {
  content: "";
  position: absolute;
  z-index: -1;
  inset: 1px 1px 0 1px;
  background: linear-gradient(#eefaff, #dcebfb 50%, #c3d3f0);
  clip-path: polygon(17px 0, 100% 0, 100% 100%, 0 100%);
}

.tab.active {
  width: 200px;
  margin-left: -18px;
  height: 22px;
  margin-bottom: -1px;
  font-weight: bold;
}

.tab.active::before {
  background: linear-gradient(#fffa96, #ffe07c 60%, #ffdc7a);
}

.sheet {
  width: 14px;
  height: 16px;
  margin-right: 12px;
}

.tab .x {
  width: 8px;
  height: 8px;
  margin-left: auto;
  margin-right: 8px;
}

.tabs-list {
  width: 12px;
  height: 5px;
  margin: 0 5px 9px auto;
  clip-path: polygon(1px 0, 11px 0, 6px 5px);
}

.frame {
  flex: 1;
  min-height: 0;
  padding: 2px;
  border: 1px solid #9c9a9c;
  background: linear-gradient(90deg, #ffdc7a, #fff78c 40%);
}

.view {
  height: 100%;
  display: grid;
  grid-template-columns: minmax(0, 1fr) 18px;
  grid-template-rows: minmax(0, 1fr) 17px;
  border: 1px solid #777;
  border-right-color: #ddd;
  border-bottom-color: #ddd;
  background-color: #efefef;
}

.canvas {
  position: relative;
  overflow: hidden;
  background-color: #fff;
}

.drawing {
  width: 100%;
  height: 100%;
}

.drawing path {
  fill: none;
  stroke: #000;
  shape-rendering: crispEdges;
}

.drawing .dash-h {
  stroke-dasharray: 19 9.35;
}

.drawing .dash-v {
  stroke-dasharray: 19.5 9.75;
}

.drawing .graph {
  stroke: #009696;
  stroke-width: 3;
}

/* demo mode notice over the drawing */
.demo {
  position: absolute;
  right: 99px;
  bottom: 0;
  display: flex;
  gap: 14px;
  color: #bdbdbd;
}

.demo svg {
  width: 46px;
  height: 46px;
}

.demo-title {
  font-size: 17px;
  line-height: 22px;
}

.demo-note {
  font-size: 12px;
  line-height: 20px;
  white-space: nowrap;
}

.scroll-v {
  display: flex;
  flex-direction: column;
  align-items: center;
  padding: 5px 2px 5px 0;
}

.scroll-v svg,
.scroll-h svg {
  width: 8px;
  height: 8px;
  fill: none;
  stroke: #555;
  stroke-width: 2;
}

.scroll-v .thumb {
  width: 15px;
  height: 17px;
  margin-top: 34px;
  margin-bottom: auto;
  background-color: #cdcdcd;
}

.scroll-h {
  display: flex;
  align-items: center;
  padding-right: 5px;
  height: 15px;
}

.scroll-h .back {
  width: 17px;
  height: 15px;
  display: flex;
  align-items: center;
  justify-content: center;
  background-color: #dadada;
}

.scroll-h .back svg {
  stroke: #000;
}

.scroll-h .thumb {
  width: 17px;
  height: 15px;
  margin-left: 64%;
  margin-right: auto;
  background-color: #bdbdbd;
}

/* property panel */
.props {
  height: 68px;
  flex: none;
  display: flex;
  border-top: 1px solid #b4b6c4;
}

.props-grip {
  width: 3px;
  margin: 2px 1px 8px 1px;
  background: repeating-linear-gradient(#e9ebf3 0 2px, transparent 2px 4px);
}

.props-panel {
  flex: 1;
  height: 35px;
  margin: 6px 6px 0 0;
  border: 1px solid #999;
  outline: 3px solid #f0f0ee;
  outline-offset: -4px;
  background: linear-gradient(#e3e2ee, #dcdbe8 50%, #c2c1d3);
}

/* status bar */
.status {
  height: 18px;
  flex: none;
  display: flex;
  border-top: 1px solid #7d8296;
  background: linear-gradient(#e4e9f2, #cdd5e5 60%, #b5bfd6);
  color: #001a8c;
}

.status p {
  flex: 1;
  padding-left: 5px;
  line-height: 19px;
  white-space: nowrap;
}

.status-cell {
  width: 86px;
  border-left: 1px solid #fff;
  box-shadow: -1px 0 #9aa3ba;
}

/* taskbar */
.taskbar {
  height: 40px;
  flex: none;
  display: flex;
  gap: 4px;
  padding: 1px 0;
  background: linear-gradient(to right, #04275a, #0a3470 50%, #032b6b);
  color: #fff;
  font-family: "Open Sans", "Noto Sans", sans-serif;
}

.start {
  width: 48px;
}

.start svg {
  width: 26px;
  height: 26px;
}

.task {
  width: 58px;
}

.task svg {
  width: 32px;
  height: 32px;
}

.task.open {
  border: 1px solid #7189b3;
  background-color: #345588;
}

.task.current {
  width: 54px;
  border-color: #e5ebf5;
  background-color: #8294b8;
  box-shadow: 4px 0 0 -1px #5d76a5, 5px 0 #e5ebf5;
}

.tray {
  margin-left: auto;
  display: flex;
  align-items: center;
  padding-right: 18px;
}

.up {
  width: 8px;
  height: 5px;
  margin-right: 13px;
}

.net {
  width: 16px;
  height: 14px;
  margin-right: 8px;
}

.lang {
  margin: 0 16px 0 7px;
  font-size: 12px;
}

.clock {
  font-size: 11px;
  line-height: 16px;
  text-align: center;
}
```
